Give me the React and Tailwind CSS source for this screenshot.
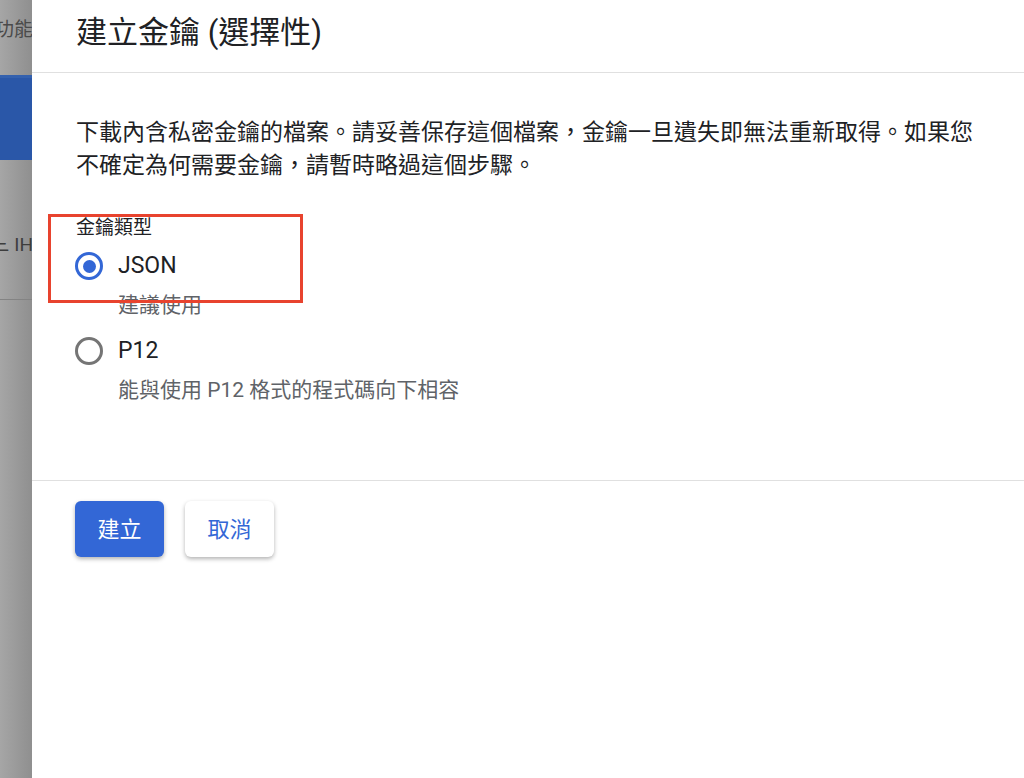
import { useState } from 'react'

const FONT = "font-['Roboto','Noto_Sans_CJK_TC',sans-serif]"

const OPTIONS = [
  { id: 'json', label: 'JSON', hint: '建議使用' },
  { id: 'p12', label: 'P12', hint: '能與使用 P12 格式的程式碼向下相容' },
]

function Radio({ checked }) {
  return (
    <span
      className={`flex h-[28px] w-[28px] shrink-0 items-center justify-center rounded-full border-[3px] ${
        checked ? 'border-[#3367d6]' : 'border-[#757575]'
      }`}
    >
      {checked && <span className="h-[13px] w-[13px] rounded-full bg-[#3367d6]" />}
    </span>
  )
}

function Backdrop() {
  return (
    <div className="relative w-[32px] shrink-0 overflow-hidden bg-gradient-to-r from-[#a6a6a6] to-[#8f8f8f]">
      <div className="absolute right-[-1px] top-[16px] whitespace-nowrap text-[19px] leading-[28px] text-[#4a4a4a]">功能</div>
      <div className="absolute left-0 top-[75px] h-[85px] w-full border-t-[3px] border-[#3461ae] bg-[#2a57a8]" />
      <div className="absolute right-[-1px] top-[238px] h-[16px] overflow-hidden whitespace-nowrap text-[19px] leading-[14px] text-[#3d3d3d]">
        三 IH
      </div>
      <div className="absolute left-0 top-[299px] h-px w-full bg-[#838383]" />
    </div>
  )
}

export default function App() {
  const [keyType, setKeyType] = useState('json')

  return (
    <div className={`flex h-[778px] w-[1024px] overflow-hidden ${FONT}`}>
      <Backdrop />

      <div className="flex flex-1 flex-col bg-white shadow-[-4px_0_10px_rgba(0,0,0,0.25)]">
        <div className="h-[73px] border-b border-[#e0e0e0] pl-[44px] pt-[13px]">
          <h1 className="text-[31px] leading-[40px] text-[#202124]">建立金鑰 (選擇性)</h1>
        </div>

        <div className="relative border-b border-[#e0e0e0] pb-[77px] pl-[44px] pr-[40px] pt-[43px]">
          <p className="text-[23px] leading-[33px] text-[#202124]">
            下載內含私密金鑰的檔案。請妥善保存這個檔案，金鑰一旦遺失即無法重新取得。如果您不確定為何需要金鑰，請暫時略過這個步驟。
          </p>

          <div className="mt-[34px] text-[19px] leading-[24px] text-[#202124]">金鑰類型</div>

          <div className="mt-[11px] flex flex-col gap-[18px]">
            {OPTIONS.map(opt => (
              <button
                key={opt.id}
                type="button"
                onClick={() => setKeyType(opt.id)}
                className="flex flex-col items-start text-left"
              >
                <span className="-ml-px flex h-[30px] items-center gap-[15px]">
                  <Radio checked={keyType === opt.id} />
                  <span className="text-[23px] text-[#202124]">{opt.label}</span>
                </span>
                <span className="mt-[11px] pl-[42px] text-[21px] leading-[26px] text-[#5f6368]">{opt.hint}</span>
              </button>
            ))}
          </div>

          <div className="pointer-events-none absolute left-[16px] top-[141px] h-[89px] w-[255px] border-[3px] border-[#e8432e]" />
        </div>

        <div className="flex gap-[21px] pl-[43px] pt-[20px]">
          <button
            type="button"
            className="h-[56px] w-[89px] rounded-[6px] bg-[#3367d6] text-[22px] text-white shadow-[0_2px_4px_rgba(0,0,0,0.3)]"
          >
            建立
          </button>
          <button
            type="button"
            className="h-[56px] w-[89px] rounded-[6px] bg-white text-[22px] text-[#3367d6] shadow-[0_2px_4px_rgba(0,0,0,0.3)]"
          >
            取消
          </button>
        </div>
      </div>
    </div>
  )
}
